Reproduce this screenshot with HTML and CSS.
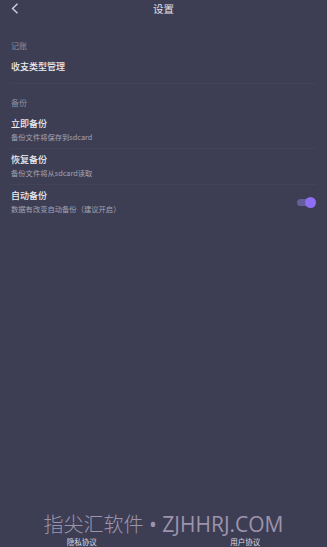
FILE: index.html
```html
<!DOCTYPE html>
<html lang="zh">
<head>
<meta charset="utf-8">
<link rel="stylesheet" href="styles.css">
</head>
<body>
<div class="page">
  <header class="topbar">
    <svg class="back" width="8" height="11" viewBox="0 0 8 11"><polyline points="6.5,0.8 1.5,5.5 6.5,10.2" fill="none" stroke="#d8d8e2" stroke-width="1.3"/></svg>
    <div class="title">设置</div>
  </header>

  <div class="label first">记账</div>
  <div class="item single">
    <div class="item-title">收支类型管理</div>
  </div>

  <div class="label">备份</div>
  <div class="item first-item">
    <div class="item-title">立即备份</div>
    <div class="item-sub">备份文件将保存到sdcard</div>
  </div>
  <div class="item">
    <div class="item-title">恢复备份</div>
    <div class="item-sub">备份文件将从sdcard读取</div>
  </div>
  <div class="item row noline">
    <div class="texts">
      <div class="item-title">自动备份</div>
      <div class="item-sub">数据有改变自动备份（建议开启）</div>
    </div>
    <div class="toggle"><span class="knob"></span></div>
  </div>

  <footer class="footer">
    <div class="link">隐私协议</div>
    <div class="link">用户协议</div>
  </footer>
  <div class="watermark">指尖汇软件<span class="latin"> • ZJHHRJ.COM</span></div>
</div>
</body>
</html>
```

FILE: styles.css
```css
* { box-sizing: border-box; margin: 0; padding: 0; }
html, body { width: 327px; height: 547px; }
body {
  background: #3d3e53;
  font-family: "Noto Sans CJK SC", "Noto Sans", sans-serif;
  color: #e6e6ee;
  overflow: hidden;
}
.page {
  position: relative;
  height: 547px;
  display: flex;
  flex-direction: column;
}
.topbar {
  position: relative;
  height: 18px;
  display: flex;
  align-items: center;
  justify-content: center;
}
.back {
  position: absolute;
  left: 11px;
  top: 3px;
}
.title {
  font-size: 10.5px;
  line-height: 18px;
  color: #e2e2ea;
}
.label {
  font-size: 8px;
  line-height: 12px;
  color: #8d8ea0;
  padding-left: 11px;
  margin-top: 13px;
}
.label.first { margin-top: 22px; }
.item {
  margin: 0 10px;
  padding: 5px 1px 5px 1px;
  border-bottom: 1px solid #424358;
}
.item.single { padding-top: 9px; padding-bottom: 10px; }
.item.first-item { padding-top: 9px; }
.item.noline { border-bottom: none; }
.item-title {
  font-size: 9px;
  line-height: 12px;
  font-weight: 500;
  color: #ececf2;
}
.item-sub {
  font-size: 7.3px;
  line-height: 12px;
  margin-top: 1px;
  color: #a3a4b3;
}
.row {
  display: flex;
  align-items: center;
  justify-content: space-between;
}
.toggle {
  position: relative;
  width: 17px;
  height: 7px;
  border-radius: 4px;
  background: #665e99;
  margin-right: 2px;
}
.knob {
  position: absolute;
  right: -2px;
  top: -2px;
  width: 11px;
  height: 11px;
  border-radius: 50%;
  background: #8c6ff2;
}
.footer {
  margin-top: auto;
  display: flex;
}
.link {
  flex: 1;
  text-align: center;
  font-size: 7.5px;
  line-height: 10px;
  color: #dcdce6;
}
.watermark {
  position: absolute;
  left: 0;
  right: 0;
  top: 514px;
  height: 20px;
  text-align: center;
  font-family: "Noto Sans CJK SC", "Noto Sans", sans-serif;
  font-size: 20px;
  line-height: 20px;
  color: #9d93ad;
  font-weight: 300;
}
.latin {
  font-family: "Open Sans", "Liberation Sans", sans-serif;
  font-size: 21px;
  line-height: 20px;
  font-weight: 400;
}
```
